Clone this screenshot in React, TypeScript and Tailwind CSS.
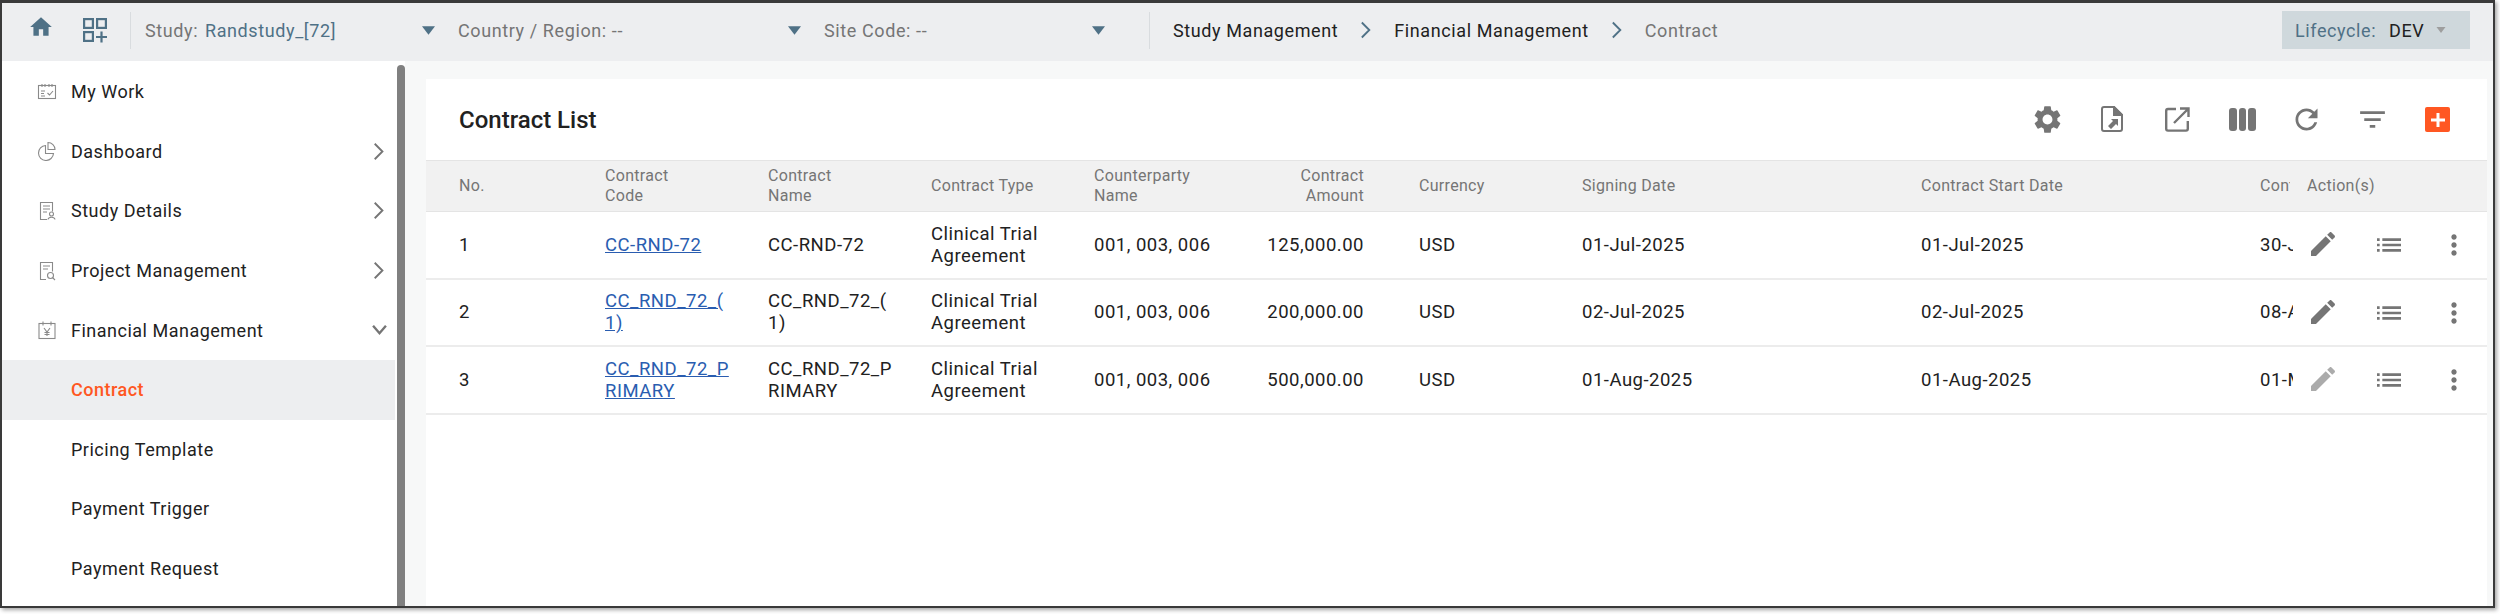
import type { ReactNode } from 'react'

const GREY = '#757575'
const SLATE = '#4f7186'

function Mui({ d, className, fill = GREY }: { d: string; className: string; fill?: string }) {
  return (
    <svg viewBox="0 0 24 24" className={className} fill={fill}>
      <path d={d} />
    </svg>
  )
}

function Chevron({ down, className, color = GREY }: { down?: boolean; className: string; color?: string }) {
  return (
    <svg viewBox="0 0 14 24" className={className} fill="none" stroke={color} strokeWidth="2.2">
      {down ? <path d="M1 8l6 7 6-7" /> : <path d="M2 3l9 9-9 9" />}
    </svg>
  )
}

function Caret({ color = SLATE, className = 'w-[13px] h-[9px]' }: { color?: string; className?: string }) {
  return (
    <svg viewBox="0 0 12 8" className={className} fill={color}>
      <path d="M0 0h12L6 8z" />
    </svg>
  )
}

function NavIcon({ children }: { children: ReactNode }) {
  return (
    <svg viewBox="0 0 20 20" className="w-[20px] h-[20px] shrink-0" fill="none" stroke="#8a8a8a" strokeWidth="1.1">
      {children}
    </svg>
  )
}

const nav: { label: string; icon?: ReactNode; chevron?: 'right' | 'down'; active?: boolean }[] = [
  {
    label: 'My Work',
    icon: (
      <NavIcon>
        <rect x="1.5" y="3.5" width="17" height="13" />
        <path d="M5 2v3M8 2v3M12 2v3M15 2v3M4 9h4M4 11.5h3M4 14h4M10.5 11l2 2 3.5-4" />
      </NavIcon>
    ),
  },
  {
    label: 'Dashboard',
    chevron: 'right',
    icon: (
      <NavIcon>
        <path d="M8.5 4.500a7.500 7.500 0 1 0 8 8h-8z" />
        <path d="M11 1.500a7 7 0 0 1 7 7h-7z" />
      </NavIcon>
    ),
  },
  {
    label: 'Study Details',
    chevron: 'right',
    icon: (
      <NavIcon>
        <path d="M10 18.5H3.5v-17h12v9" />
        <path d="M6 5h7M6 8h7M6 11h4" />
        <circle cx="14.5" cy="13" r="2" />
        <path d="M11 18.5c.5-3 6.500-3 7 0" />
      </NavIcon>
    ),
  },
  {
    label: 'Project Management',
    chevron: 'right',
    icon: (
      <NavIcon>
        <path d="M9 18.500H3.500v-17h12v9" />
        <path d="M6 5h7M6 8h5" />
        <circle cx="13.500" cy="14.500" r="3" />
        <path d="M15.500 16.500l2.500 2.500" />
      </NavIcon>
    ),
  },
  {
    label: 'Financial Management',
    chevron: 'down',
    icon: (
      <NavIcon>
        <rect x="2" y="3.500" width="16" height="15" />
        <path d="M6 1.500v4M14 1.500v4M7 8l3 4 3-4M10 12v4M7.500 12.500h5M7.500 14.500h5" />
      </NavIcon>
    ),
  },
  { label: 'Contract', active: true },
  { label: 'Pricing Template' },
  { label: 'Payment Trigger' },
  { label: 'Payment Request' },
]

// zero width space lets the code wrap after the bracket, like the real table does
const rows = [
  { no: '1', code: 'CC-RND-72', party: '001, 003, 006', amount: '125,000.00', signing: '01-Jul-2025', start: '01-Jul-2025', end: '30-Jun-2026' },
  { no: '2', code: 'CC_RND_72_(\u200b1)', party: '001, 003, 006', amount: '200,000.00', signing: '02-Jul-2025', start: '02-Jul-2025', end: '08-Apr-2026' },
  { no: '3', code: 'CC_RND_72_PRIMARY', party: '001, 003, 006', amount: '500,000.00', signing: '01-Aug-2025', start: '01-Aug-2025', end: '01-May-2026', locked: true },
]

const EDIT = 'M3 17.250V21h3.750L17.810 9.940l-3.750-3.750L3 17.250zM20.710 7.040c.390-.390.390-1.020 0-1.410l-2.340-2.340c-.390-.390-1.020-.390-1.410 0l-1.830 1.830 3.750 3.750 1.830-1.830z'
const LIST = 'M3 13h2v-2H3v2zm0 4h2v-2H3v2zm0-8h2V7H3v2zm4 4h14v-2H7v2zm0 4h14v-2H7v2zM7 7v2h14V7H7z'
const MORE = 'M12 8c1.100 0 2-.9 2-2s-.9-2-2-2-2 .9-2 2 .9 2 2 2zm0 2c-1.100 0-2 .9-2 2s.9 2 2 2 2-.9 2-2-.9-2-2-2zm0 6c-1.100 0-2 .9-2 2s.9 2 2 2 2-.9 2-2-.9-2-2-2z'
const GEAR = 'M19.140 12.940c.040-.3.060-.61.060-.94 0-.32-.020-.64-.070-.94l2.030-1.580a.49.49 0 0 0 .120-.610l-1.920-3.320a.488.488 0 0 0-.590-.220l-2.390.960c-.5-.380-1.030-.7-1.620-.940l-.360-2.540a.484.484 0 0 0-.480-.410h-3.840c-.240 0-.430.170-.470.410l-.360 2.540c-.590.240-1.130.570-1.620.940l-2.390-.960c-.220-.080-.470 0-.590.220L2.740 8.870c-.120.210-.080.470.120.610l2.030 1.580c-.050.3-.090.630-.090.940s.020.640.070.940l-2.030 1.580a.49.49 0 0 0-.120.610l1.920 3.320c.120.220.370.290.590.220l2.390-.960c.5.380 1.030.7 1.620.940l.360 2.540c.050.240.240.410.480.410h3.840c.240 0 .440-.170.470-.410l.360-2.540c.590-.240 1.130-.560 1.620-.940l2.390.960c.220.080.470 0 .590-.220l1.920-3.320c.120-.220.070-.470-.120-.610l-2.010-1.580zM12 15.600c-1.980 0-3.600-1.620-3.600-3.600s1.620-3.600 3.600-3.600 3.600 1.620 3.600 3.600-1.620 3.600-3.600 3.600z'
const REFRESH = 'M17.650 6.350C16.200 4.900 14.210 4 12 4c-4.420 0-7.990 3.580-7.990 8s3.570 8 7.990 8c3.730 0 6.840-2.550 7.730-6h-2.080c-.820 2.330-3.040 4-5.650 4-3.310 0-6-2.690-6-6s2.690-6 6-6c1.660 0 3.140.690 4.220 1.780L13 11h7V4l-2.350 2.350z'
const FILTER = 'M10 18h4v-2h-4v2zM3 6v2h18V6H3zm3 7h12v-2H6v2z'
const HOME = 'M10 20v-6h4v6h5v-8h3L12 3 2 12h3v8z'

function Head({ className, children }: { className: string; children?: ReactNode }) {
  return <div className={`shrink-0 ${className}`}>{children}</div>
}

export default function App() {
  return (
    <div className="w-[2500px] h-[614px] bg-white overflow-hidden font-['Roboto',sans-serif]">
      <div className="w-[2495px] h-[608px] flex flex-col border-2 border-t-[3px] border-[#3a3a3a] bg-white shadow-[2px_2px_4px_rgba(0,0,0,0.35)] overflow-hidden">
        {/* top bar */}
        <div className="h-[58px] shrink-0 bg-[#edeef0] pb-[4px] flex items-center text-[18px] tracking-[0.6px] text-[#757575]">
          <div className="ml-[26px] w-[55px] shrink-0">
            <Mui d={HOME} fill={SLATE} className="w-[26px] h-[26px] -mt-[6px]" />
          </div>
          <svg viewBox="0 0 24 25" className="w-[24px] h-[25px] shrink-0" fill="none" stroke={SLATE} strokeWidth="2.200">
            <rect x="1.100" y="1.100" width="8.800" height="8.800" />
            <rect x="14.100" y="1.100" width="8.800" height="8.800" />
            <rect x="1.100" y="14.100" width="8.800" height="8.800" />
            <path d="M13 19h11M18.500 13.500v11" />
          </svg>
          <div className="ml-[23px] w-px h-[37px] bg-[#d9dcdf] shrink-0" />
          <div className="ml-[14px] w-[290px] shrink-0 flex items-center">
            <span className="w-[60px]">Study:</span>
            <span className="text-[#4f7186] w-[217px]">Randstudy_[72]</span>
            <Caret />
          </div>
          <div className="ml-[23px] w-[343px] shrink-0 flex items-center">
            <span className="w-[330px]">Country / Region: --</span>
            <Caret />
          </div>
          <div className="ml-[23px] w-[281px] shrink-0 flex items-center">
            <span className="w-[268px]">Site Code: --</span>
            <Caret />
          </div>
          <div className="ml-[44px] w-px h-[37px] bg-[#d9dcdf] shrink-0" />
          <span className="ml-[23px] text-[#212121]">Study Management</span>
          <Chevron color={SLATE} className="ml-[22px] w-[12px] h-[20px]" />
          <span className="ml-[22px] text-[#212121]">Financial Management</span>
          <Chevron color={SLATE} className="ml-[22px] w-[12px] h-[20px]" />
          <span className="ml-[22px]">Contract</span>
          <div className="ml-auto mr-[23px] w-[188px] h-[38px] bg-[#cfd8dc] flex items-center pl-[13px]">
            <span className="text-[#4f7186] w-[94px]">Lifecycle:</span>
            <span className="text-[#212121] w-[47px]">DEV</span>
            <Caret color="#9e9e9e" className="w-[10px] h-[6px]" />
          </div>
        </div>

        <div className="flex flex-1 min-h-0">
          {/* sidebar */}
          <div className="w-[403px] shrink-0 flex bg-white">
            <div className="w-[393px] shrink-0 pt-px">
              {nav.map((n) => (
                <div
                  key={n.label}
                  className={`h-[59.600px] flex items-center text-[18px] tracking-[0.5px] ${n.active ? 'bg-[#edeef0] text-[#ff5722] font-medium' : 'text-[#212121]'}`}
                >
                  <div className="ml-[35px] w-[34px] shrink-0">{n.icon}</div>
                  <span>{n.label}</span>
                  {n.chevron === 'right' && <Chevron className="ml-auto mr-[10px] w-[12px] h-[21px]" />}
                  {n.chevron === 'down' && <Chevron down className="ml-auto mr-[8px] w-[15px] h-[26px]" />}
                </div>
              ))}
            </div>
            <div className="ml-[2px] mt-[4px] w-[8px] flex-1 bg-[#808080] rounded-t-full" />
          </div>

          {/* content */}
          <div className="flex-1 min-w-0 bg-[#f7f8f8] pt-[18px] pl-[21px] pr-[6px]">
            <div className="h-full bg-white">
              <div className="h-[81px] flex items-center pl-[33px]">
                <h1 className="text-[24px] font-medium text-[#212121]">Contract List</h1>
                <div className="ml-auto relative w-[452px] h-[81px]">
                  <Mui d={GEAR} className="absolute left-[-4px] top-[24px] w-[33px] h-[33px]" />
                  <svg viewBox="0 0 22 26" className="absolute left-[66px] top-[27px] w-[22px] h-[26px]" fill="none" stroke={GREY} strokeWidth="2">
                    <path d="M1 3a2 2 0 0 1 2-2h10l8 8v14a2 2 0 0 1-2 2H3a2 2 0 0 1-2-2z" />
                    <path d="M13 1v8h8z" fill={GREY} />
                    <path d="M10 13h7v7l-2-2-5 5-3-3 5-5z" fill={GREY} stroke="none" />
                  </svg>
                  <svg viewBox="0 0 25 25" className="absolute left-[130px] top-[28px] w-[25px] h-[25px]" fill="none" stroke={GREY} strokeWidth="2.400">
                    <path d="M11 2H3a1.800 1.800 0 0 0-1.800 1.800v18a1.800 1.800 0 0 0 1.800 1.800h18a1.800 1.800 0 0 0 1.800-1.800V14" />
                    <path d="M15 1.500h8.500V10M23 2L9 16" />
                  </svg>
                  <div className="absolute left-[194px] top-[29px] flex gap-[2px]">
                    <div className="w-[7.600px] h-[23px] rounded-[3px] bg-[#757575]" />
                    <div className="w-[7.600px] h-[23px] rounded-[3px] bg-[#757575]" />
                    <div className="w-[7.600px] h-[23px] rounded-[3px] bg-[#757575]" />
                  </div>
                  <Mui d={REFRESH} className="absolute left-[255px] top-[23.500px] w-[33px] h-[33px]" />
                  <Mui d={FILTER} className="absolute left-[321px] top-[24px] w-[33px] h-[33px]" />
                  <div className="absolute left-[390px] top-[28px] w-[25px] h-[25px] rounded-[2px] bg-[#ff5722] flex items-center justify-center">
                    <svg viewBox="0 0 14 14" className="w-[14px] h-[14px]" stroke="white" strokeWidth="3">
                      <path d="M7 0v14M0 7h14" />
                    </svg>
                  </div>
                </div>
              </div>

              {/* table head */}
              <div className="h-[52px] bg-[#f1f1f1] border-t border-b border-[#e4e4e4] flex items-center text-[16px] tracking-[0.3px] leading-[20px] text-[#757575]">
                <Head className="w-[179px] pl-[33px]">No.</Head>
                <Head className="w-[163px]">Contract<br />Code</Head>
                <Head className="w-[163px]">Contract<br />Name</Head>
                <Head className="w-[163px]">Contract Type</Head>
                <Head className="w-[163px]">Counterparty<br />Name</Head>
                <Head className="w-[107px] text-right">Contract<br />Amount</Head>
                <Head className="w-[55px]" />
                <Head className="w-[163px]">Currency</Head>
                <Head className="w-[339px]">Signing Date</Head>
                <Head className="w-[339px]">Contract Start Date</Head>
                <Head className="w-[30px] overflow-hidden whitespace-nowrap">Contract End Date</Head>
                <Head className="ml-[17px]">Action(s)</Head>
              </div>

              {/* table rows */}
              {rows.map((r) => (
                <div key={r.no} className="h-[67.600px] border-b-2 border-[#ececec] flex items-center text-[18.500px] tracking-[0.5px] leading-[22px] text-[#212121]">
                  <div className="w-[179px] shrink-0 pl-[33px]">{r.no}</div>
                  <div className="w-[163px] shrink-0 pr-[36px] break-all">
                    <a href="#" className="text-[#2a5db0] underline">{r.code}</a>
                  </div>
                  <div className="w-[163px] shrink-0 pr-[36px] break-all">{r.code}</div>
                  <div className="w-[163px] shrink-0 pr-[20px]">Clinical Trial Agreement</div>
                  <div className="w-[163px] shrink-0">{r.party}</div>
                  <div className="w-[107px] shrink-0 text-right">{r.amount}</div>
                  <div className="w-[55px] shrink-0" />
                  <div className="w-[163px] shrink-0">USD</div>
                  <div className="w-[339px] shrink-0">{r.signing}</div>
                  <div className="w-[339px] shrink-0">{r.start}</div>
                  <div className="w-[33px] shrink-0 overflow-hidden whitespace-nowrap">{r.end}</div>
                  <div className="ml-[14px] relative h-full w-[170px]">
                    <Mui d={EDIT} fill={r.locked ? '#ababab' : GREY} className="absolute left-[0px] top-[16px] w-[32px] h-[32px]" />
                    <Mui d={LIST} className="absolute left-[66px] top-[17px] w-[32px] h-[32px]" />
                    <Mui d={MORE} className="absolute left-[131px] top-[17px] w-[32px] h-[32px]" />
                  </div>
                </div>
              ))}
            </div>
          </div>
        </div>
      </div>
    </div>
  )
}
